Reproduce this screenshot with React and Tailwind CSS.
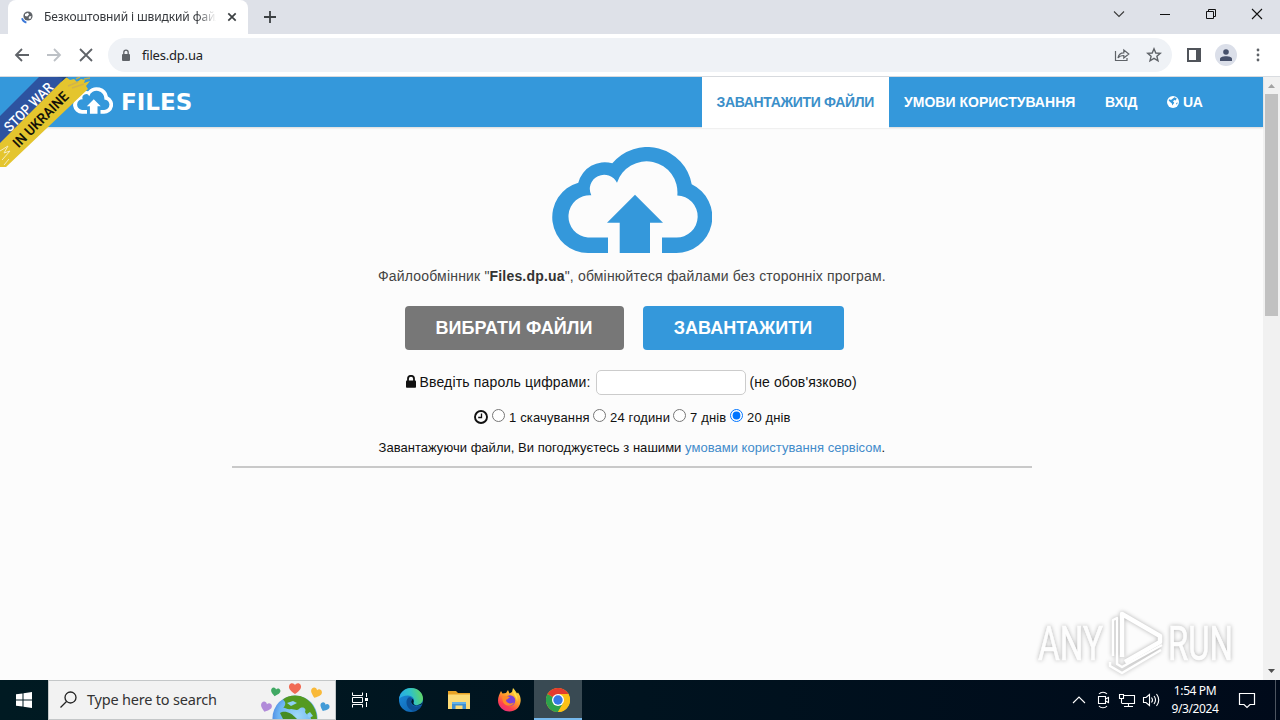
const navItems = [
  { title: "ЗАВАНТАЖИТИ ФАЙЛИ", box: "w-[187px] h-[51px] bg-white text-[#3b8fc9]", text: "w-[158px] tracking-[-0.34px]" },
  { title: "УМОВИ КОРИСТУВАННЯ", box: "w-[201px] h-[50px] text-white", text: "w-[171px] tracking-[0.02px]" },
  { title: "ВХІД", box: "w-[62px] h-[50px] text-white", text: "w-[32px] tracking-[-0.1px]" },
]

const lifetimes = [
  { label: "1 скачування", width: "w-[84px]" },
  { label: "24 години", width: "w-[63px]" },
  { label: "7 днів", width: "w-[40px]" },
  { label: "20 днів", width: "w-[42px]", checked: true },
]

function CloudLogo({ className, color }) {
  return (
    <svg viewBox="0 0 160 106" className={className} fill={color}>
      <path d="M56 106H36A35.83 35.83 0 0 1 26.3 35.7A27.3 27.3 0 0 1 60.3 16.3A45.3 45.3 0 0 1 139.7 37.3A36.1 36.1 0 0 1 124 106H110V90.5H124A20.5 20.5 0 0 0 125.3 48.5A31 31 0 0 0 65 35.7A14.3 14.3 0 0 0 39.3 48.3A21 21 0 0 0 36 90.5H56Z" />
      <path d="M83 47.7L111 75.7H98V106H67.7V75.7H55Z" />
    </svg>
  )
}

function StopWarRibbon() {
  return (
    <svg className="absolute left-0 top-0 h-[92px] w-[94px]" viewBox="0 0 94 92">
      <path d="M39 0H68L0 68V39Z" fill="#2d53a0" />
      <path d="M66 0L70 3L74 2L77 5L81 2L85 3L84 6L90 4L86 9L88 12L6 90H0V66Z" fill="#e4c52e" />
      <path d="M57 0H67L61 5L63 1Z" fill="#1f4688" />
      <path d="M76 2L80 0M84 2L90 1" stroke="#b9ab52" strokeWidth="1.6" />
      <path d="M0 74L8 69L4 76L10 74L2 83M4 88L9 82" stroke="#f6ecc0" strokeWidth="1" fill="none" />
      <path d="M68 9L78 5M72 11L84 7" stroke="#d3b34b" strokeWidth="1.4" />
      <g fontFamily="Roboto" fontSize="14" textAnchor="middle">
        <text transform="translate(32 33.500) rotate(-45)" fill="#fff" fontWeight="500" textLength="63" lengthAdjust="spacingAndGlyphs">STOP WAR</text>
        <text transform="translate(44 46) rotate(-45)" fill="#151208" fontWeight="600" textLength="72" lengthAdjust="spacingAndGlyphs">IN UKRAINE</text>
      </g>
    </svg>
  )
}

function TabStrip() {
  return (
    <div className="flex h-[34px] bg-[#dee1e8] pl-2">
      <div className="flex h-[34px] w-60 items-center rounded-t-lg bg-white pl-[13px]">
        <svg width="15" height="15" viewBox="0 0 15 15">
          <circle cx="7" cy="6" r="4.6" fill="#5f6368" />
          <path d="M4 4L7 2.8L8 4.5L6.2 6.5L4 6ZM8 6.4L10.4 6L9.4 9L7.6 8.6Z" fill="#fff" />
          <path d="M1 8.3A6 6 0 0 0 5.4 12.7" stroke="#3b78d8" strokeWidth="1.8" fill="none" />
        </svg>
        <div className="ml-2 w-[174px] overflow-hidden whitespace-nowrap text-[12px] leading-4 tracking-[-0.12px] text-[#35383c] [mask-image:linear-gradient(to_right,black_88%,transparent_99%)]">
          Безкоштовний і швидкий файл
        </div>
        <svg className="ml-[9px]" width="10" height="10" viewBox="0 0 10 10">
          <path d="M1.3 1.3L8.7 8.7M8.7 1.3L1.3 8.7" stroke="#3c4043" strokeWidth="1.7" />
        </svg>
      </div>
      <svg className="ml-4 mt-[11px]" width="12" height="12" viewBox="0 0 12 12">
        <path d="M6 0V12M0 6H12" stroke="#3c4043" strokeWidth="1.8" />
      </svg>
      <div className="mr-[17px] mt-[8px] ml-auto flex h-3 items-center gap-[34px]">
        <svg width="12" height="12" viewBox="0 0 12 12" fill="none" stroke="#3a3a3a" strokeWidth="1.1">
          <path d="M1 3.5L6 8.5L11 3.5" />
        </svg>
        <svg width="12" height="12" viewBox="0 0 12 12"><path d="M1 6.5H11" stroke="#111" /></svg>
        <svg width="12" height="12" viewBox="0 0 12 12" fill="none" stroke="#111">
          <path d="M1.5 3.5H8.5V10.5H1.5ZM3.5 3.5V1.5H10.5V8.5H8.5" />
        </svg>
        <svg width="12" height="12" viewBox="0 0 12 12" stroke="#111" strokeWidth="1.1">
          <path d="M1 1L11 11M11 1L1 11" />
        </svg>
      </div>
    </div>
  )
}

function Toolbar() {
  return (
    <div className="flex h-[43px] items-center border-b border-[#d9dce0] bg-white pl-[14px]">
      <svg width="80" height="16" viewBox="0 0 80 16" fill="none" strokeWidth="1.8">
        <path d="M15 8H2M8 2L2 8L8 14" stroke="#5f6368" />
        <path d="M33 8H46M40 2L46 8L40 14" stroke="#bdc1c6" />
        <path d="M66 2L78 14M78 2L66 14" stroke="#5f6368" />
      </svg>
      <div className="ml-[14px] flex h-[34px] w-[1064px] items-center rounded-full bg-[#eff2f6] pl-[13px]">
        <svg width="10" height="13" viewBox="0 0 10 13">
          <rect x="1" y="5" width="8" height="7" rx="1" fill="#5f6368" />
          <path d="M2.8 5V3.4A2.2 2.2 0 0 1 7.2 3.4V5" stroke="#5f6368" strokeWidth="1.3" fill="none" />
        </svg>
        <span className="ml-[11px] text-[13px] leading-5 tracking-[-0.2px] text-[#202124]">files.dp.ua</span>
        <svg className="ml-auto" width="16" height="16" viewBox="0 0 16 16" fill="none" stroke="#5f6368" strokeWidth="1.2">
          <path d="M1.5 4V13.5H13V11" />
          <path d="M4 11C4.5 7.5 7 5.8 9.8 5.8V3L14.8 7L9.8 11V8.5C7.4 8.5 5.5 9 4 11Z" />
        </svg>
        <svg className="ml-4 mr-[10px]" width="16" height="16" viewBox="0 0 16 16" fill="none" stroke="#5f6368" strokeWidth="1.4">
          <path d="M8 1.8L9.8 6L14.3 6.4L10.9 9.3L12 13.8L8 11.4L4 13.8L5.1 9.3L1.7 6.4L6.2 6Z" />
        </svg>
      </div>
      <svg className="ml-[15px]" width="14" height="14" viewBox="0 0 14 14">
        <path d="M0 0H14V14H0ZM2 2V12H9V2Z" fill="#50545a" fillRule="evenodd" />
      </svg>
      <div className="ml-[14px] flex h-[22px] w-[22px] items-center justify-center rounded-full bg-[#dbdfe9]">
        <svg width="12" height="12" viewBox="0 0 12 12" fill="#46506a">
          <circle cx="6" cy="3" r="2.8" />
          <path d="M0 12V9.8C0 6.4 12 6.4 12 9.8V12Z" />
        </svg>
      </div>
      <svg className="ml-[19px]" width="4" height="14" viewBox="0 0 4 14" fill="#5f6368">
        <circle cx="2" cy="2" r="1.4" />
        <circle cx="2" cy="7" r="1.4" />
        <circle cx="2" cy="12" r="1.4" />
      </svg>
    </div>
  )
}

function SiteHeader() {
  return (
    <header className="relative flex h-[50px] bg-[#3498db] pl-[73px] font-['Liberation_Sans',sans-serif] shadow-[0_1px_2px_rgba(0,0,0,0.15)]">
      <CloudLogo className="mt-[10px] h-[27px] w-10" color="#fff" />
      <span className="ml-[8px] mt-2.5 text-[23px] font-bold leading-[30px] text-white font-['DejaVu_Sans',sans-serif]">FILES</span>
      <nav className="absolute left-[702px] top-0 flex text-[14px] font-bold">
        {navItems.map((item) => (
          <div key={item.title} className={`flex items-center justify-center whitespace-nowrap ${item.box}`}>
            <span className={item.text}>{item.title}</span>
          </div>
        ))}
        <div className="flex h-[50px] items-center gap-1 pl-[15px] text-white">
          <svg width="12" height="12" viewBox="0 0 12 12">
            <circle cx="6" cy="6" r="6" fill="#fff" />
            <path d="M7.500 1.200L9.800 2.600L8.600 4.400L7.200 4L6 5.600L7.200 6.400L6.800 7.600L5.200 9.600L4.900 7.600L2.600 5.600L1.600 4.200L2.400 3.200L4 4Z" fill="#3498db" />
            <path d="M9 7L10.800 6.400L9.800 8.800Z" fill="#3498db" />
          </svg>
          <span className="tracking-[-0.3px]">UA</span>
        </div>
      </nav>
      <StopWarRibbon />
    </header>
  )
}

function UploadForm() {
  return (
    <main className="flex flex-col items-center font-['Liberation_Sans',sans-serif] text-[#111]">
      <CloudLogo className="mt-5 h-[106px] w-40" color="#3498db" />
      <p className="mt-[13px] h-5 w-[507px] whitespace-nowrap text-[14px] leading-5 tracking-[0.18px] text-[#444]">
        Файлообмінник "<b className="text-[#333]">Files.dp.ua</b>", обмінюйтеся файлами без сторонніх програм.
      </p>
      <div className="mt-5 mr-[15px] flex gap-[19px] text-[18px] font-bold text-white">
        <button className="h-11 w-[219px] rounded bg-[#777]">ВИБРАТИ ФАЙЛИ</button>
        <button className="h-11 w-[201px] rounded bg-[#3498db]">ЗАВАНТАЖИТИ</button>
      </div>
      <div className="mt-5 flex h-[25px] w-[452px] items-center whitespace-nowrap text-[14px]">
        <svg className="mb-[3px] shrink-0" width="10" height="13" viewBox="0 0 10 13">
          <rect y="5.5" width="10" height="7.3" rx=".8" fill="#111" />
          <path d="M2 6V3.8A3 3 0 0 1 8 3.8V6" stroke="#111" strokeWidth="1.8" fill="none" />
        </svg>
        <span className="ml-1 w-[176px] shrink-0 tracking-[0.17px]">Введіть пароль цифрами:</span>
        <input className="h-[25px] w-[150px] shrink-0 rounded-[5px] border border-[#ccc] bg-white" />
        <span className="ml-1 tracking-[0.1px]">(не обов'язково)</span>
      </div>
      <div className="mt-[12px] flex h-5 items-center whitespace-nowrap text-[13px]">
        <svg className="mr-1 mb-px" width="14" height="14" viewBox="0 0 14 14" fill="none" stroke="#111">
          <circle cx="7" cy="7" r="6" strokeWidth="1.9" />
          <path d="M7.5 3.5V7.5H4.2" strokeWidth="1.3" />
        </svg>
        {lifetimes.map((item) => (
          <label key={item.label} className="flex items-center">
            <input type="radio" name="lifetime" defaultChecked={item.checked} className="mb-[3px] mr-1 h-[13px] w-[13px]" />
            <span className={`pt-px leading-5 tracking-[0.15px] ${item.width}`}>{item.label}</span>
          </label>
        ))}
      </div>
      <p className="mt-[11px] h-5 w-[506px] whitespace-nowrap text-[13px] leading-5 tracking-[0.03px]">
        Завантажуючи файли, Ви погоджуєтесь з нашими <a className="text-[#428bca]">умовами користування сервісом</a>.
      </p>
      <hr className="mt-2 h-0.5 w-[800px] border-0 bg-[#c9c9c9]" />
    </main>
  )
}

function Watermark() {
  return (
    <svg className="absolute left-[1034px] top-[604px] [filter:drop-shadow(0_0_2px_rgba(0,0,0,0.3))]" width="216" height="76" viewBox="0 -4 216 76">
      <g fill="#fdfdfd" stroke="#fff" strokeWidth=".6" fontFamily="Roboto" fontSize="49" fontWeight="400">
        <text x="4" y="52" textLength="65" lengthAdjust="spacingAndGlyphs">ANY</text>
        <text x="134" y="52" textLength="65" lengthAdjust="spacingAndGlyphs">RUN</text>
      </g>
      <g fill="none" stroke="#fff" strokeLinejoin="round">
        <path d="M88 49V6L126 28V34L91 54" strokeWidth="4.500" />
        <path d="M79 48V12L83 10V56L88 59L128 37" strokeWidth="2.500" />
        <path d="M76 54V58L88 65L127 42" strokeWidth="2.500" />
      </g>
    </svg>
  )
}

function Scrollbar() {
  return (
    <div className="flex h-[603px] w-[17px] flex-col items-center bg-[#f1f1f1]">
      <svg width="17" height="17" viewBox="0 0 17 17"><path d="M5 11L8.5 7L12 11Z" fill="#a3a3a3" /></svg>
      <div className="h-[222px] w-[13px] bg-[#c1c1c1]" />
      <svg className="mt-auto" width="17" height="17" viewBox="0 0 17 17"><path d="M5 6L8.5 10L12 6Z" fill="#505050" /></svg>
    </div>
  )
}

function EarthHearts() {
  const heart = "M0 5C-5 1.500-6-.5-5.300-2.800C-4-5.500-1-5 0-3C1-5 4-5.500 5.300-2.800C6-.5 5 1.500 0 5Z"
  return (
    <svg className="ml-auto" width="80" height="38" viewBox="0 0 80 38">
      <defs>
        <radialGradient id="sea" cx=".55" cy=".45" r=".6">
          <stop offset="0" stopColor="#9fd8f8" />
          <stop offset=".7" stopColor="#6cb4f2" />
          <stop offset="1" stopColor="#4a85e0" />
        </radialGradient>
      </defs>
      <circle cx="40" cy="37" r="22.5" fill="url(#sea)" />
      <path d="M28 18.500C33 14 43 13 50 17C57 21 62 29 62 38H56C56 34 52 35 50 31C52 27 47 25 44 28C42 30 39 28 36 28C32 29 30 26 28 27C31 24 31 21 28 18.500Z" fill="#549a20" />
      <path d="M25 32C29 29 36 31 42 38H28Z" fill="#468c22" />
      <path d="M32 22L38 20L42 22L36 25ZM52 33L55 31L58 35L54 37Z" fill="#8ed0f5" />
      <path d={heart} fill="#f16a54" transform="translate(40 7.500) scale(1.1)" />
      <path d={heart} fill="#40a863" transform="translate(20.500 11) rotate(12) scale(.85)" />
      <path d={heart} fill="#f9b938" transform="translate(61 12) rotate(20)" />
      <path d={heart} fill="#b18bd9" transform="translate(11 26) rotate(18)" />
      <path d={heart} fill="#429bd7" transform="translate(69.500 26) rotate(24) scale(.85)" />
    </svg>
  )
}

function EdgeIcon() {
  return (
    <svg width="24" height="24" viewBox="0 0 24 24">
      <defs>
        <linearGradient id="edgeTop" x1="0" y1=".5" x2="1" y2=".3">
          <stop stopColor="#27a9e8" />
          <stop offset=".5" stopColor="#2fc2c8" />
          <stop offset="1" stopColor="#65d85c" />
        </linearGradient>
        <linearGradient id="edgeLow" x1="0" y1="0" x2="1" y2="1">
          <stop stopColor="#1c8fdf" />
          <stop offset="1" stopColor="#0c5aa6" />
        </linearGradient>
      </defs>
      <circle cx="12" cy="12" r="12" fill="url(#edgeLow)" />
      <path d="M.1 11C.8 4.700 5.700 0 12 0C19 0 24 5 24 10.500C24 15 20.500 17.200 17.300 17.200C14.500 17.200 13.600 16 14.600 14.600C16.400 11.500 13.500 7.500 9 7.500C5 7.500 1.500 9 .1 11Z" fill="url(#edgeTop)" />
      <path d="M9.500 9.500C6 12 7 20 13 22.500C18 23.500 21.500 20 22.500 17.500C17 20 11.500 18 12 13.500C12.200 12 13 11.500 13.500 11C12.500 9.500 11 9 9.500 9.500Z" fill="#0d4f96" />
      <path d="M12.300 13C11.700 16.500 15.500 19 22.500 16.600L23.500 14.500C20 18 14 18 14.500 14.500C15.100 13.300 14.500 11.500 13.500 10.800Z" fill="#00182a" />
    </svg>
  )
}

function FolderIcon() {
  return (
    <svg width="22" height="20" viewBox="0 0 22 20">
      <path d="M0 1H8L10 3H22V19H0Z" fill="#e8a325" />
      <path d="M0 4.500H22V19H0Z" fill="#fcdb76" />
      <path d="M4 19V12H18V19H14.500V15.500H7.500V19Z" fill="#3f8fd0" />
      <path d="M4 12H18V14H4Z" fill="#63b1e6" />
    </svg>
  )
}

function FirefoxIcon() {
  return (
    <svg width="23" height="24" viewBox="0 0 23 24">
      <defs>
        <linearGradient id="fox" x1=".8" y1="0" x2=".2" y2="1">
          <stop stopColor="#ffe84a" />
          <stop offset=".45" stopColor="#ff9a2a" />
          <stop offset=".75" stopColor="#ff4050" />
          <stop offset="1" stopColor="#e32c85" />
        </linearGradient>
      </defs>
      <path d="M3 3L4.500 5.500L8 5L10 2L11.500 5.500L14 4L15 0C17 2 18 4 19 5.500L20 4.500C22.500 8 23 11 22.500 14C21.500 20 17 23.500 11.500 23.500C5 23.500 0 18.500 0 12.500C0 9 1.500 6 3 3Z" fill="url(#fox)" />
      <circle cx="12" cy="12.500" r="5.300" fill="#7b42d8" />
      <path d="M4 9C7 7.500 10 8 12 9.500C10 10 10 11.500 8 11.800C8 15 12 16.500 16 14.500C15 18.500 7 19 5 14Z" fill="#ff8a26" />
      <path d="M15 2C18 6 20.500 9 19 14C19 9 15.500 8 15 2Z" fill="#ffe14a" />
    </svg>
  )
}

function ChromeIcon() {
  return (
    <svg width="24" height="24" viewBox="0 0 24 24">
      <circle cx="12" cy="12" r="12" fill="#fbc116" />
      <path d="M12 12L1.600 6A12 12 0 0 0 12 24L17.200 15Z" fill="#2da14c" />
      <path d="M12 12L1.600 6A12 12 0 0 1 22.400 6H12Z" fill="#e33b2e" />
      <path d="M12 6H22.400A12 12 0 0 1 12 24L17.200 15Z" fill="#fbc116" />
      <circle cx="12" cy="12" r="6" fill="#fff" />
      <circle cx="12" cy="12" r="4.700" fill="#3478e5" />
    </svg>
  )
}

function Taskbar() {
  return (
    <div className="flex h-10 bg-gradient-to-r from-[#001a22] via-[#00131f] to-[#000a1a] text-white">
      <div className="flex w-12 items-center justify-center">
        <svg width="16" height="16" viewBox="0 0 16 16" fill="#fff">
          <path d="M0 2.300L6.500 1.400V7.500H0ZM7.500 1.200L16 0V7.500H7.500ZM0 8.500H6.500V14.600L0 13.700ZM7.500 8.500H16V16L7.500 14.800Z" />
        </svg>
      </div>
      <div className="flex w-72 items-center border border-[#c4c7c8] bg-[#f2f2f2] text-[#333]">
        <svg className="ml-[11px]" width="17" height="18" viewBox="0 0 17 18" fill="none" stroke="#222" strokeWidth="1.3">
          <circle cx="10.500" cy="6.500" r="5.500" />
          <path d="M6.500 10.500L.5 16.500" />
        </svg>
        <span className="ml-[10px] whitespace-nowrap text-[14.5px] tracking-[-0.2px]">Type here to search</span>
        <EarthHearts />
      </div>
      <div className="flex w-12 items-center justify-center">
        <svg width="16" height="16" viewBox="0 0 16 16" fill="none" stroke="#fff">
          <path d="M.5 .5V3.500H10.500V.5M.5 15.500V12.500H10.500V15.500M.5 5.500H10.500V10.500H.5ZM14.500 1V5M14.500 10V15" />
          <path d="M13 6H16V9H13Z" fill="#fff" stroke="none" />
        </svg>
      </div>
      <div className="ml-[3px] flex w-12 items-center justify-center"><EdgeIcon /></div>
      <div className="flex w-12 items-center justify-center"><FolderIcon /></div>
      <div className="ml-0.5 flex w-12 items-center justify-center"><FirefoxIcon /></div>
      <div className="ml-px flex w-12 items-center justify-center border-b-2 border-[#76b9ed] bg-[#394a53] pt-0.5"><ChromeIcon /></div>
      <div className="ml-auto flex items-center">
        <svg width="92" height="20" viewBox="-1 0 92 20" fill="none" stroke="#fff" strokeWidth="1.1">
          <path d="M2 13L8 7L14 13" />
          <path d="M27.500 6.500H34.500V13.500H27.500ZM34.500 9L37.500 7.500V12.500L34.500 11M28 4C30 1.700 34 1.700 36 4M28 16C30 18.300 34 18.300 36 16" />
          <path d="M52.500 5.500H63.500V13.500H51M57.500 13.500V16.500M53 16.500H62M48.500 4.500H52.500V8.500H48.500ZM50.500 8.500V13.500" />
          <path d="M72.500 7.500H75L78.500 4.500V15.500L75 12.500H72.500ZM80.500 7.500Q82.500 10 80.500 12.500M83 6Q86 10 83 14M85.500 4Q90 10 85.500 16" />
        </svg>
        <div className="w-[66px] text-center text-[12px] leading-[18px] tracking-[-0.4px]">
          <div>1:54 PM</div>
          <div>9/3/2024</div>
        </div>
        <svg className="ml-[10px]" width="18" height="18" viewBox="0 0 18 18" fill="none" stroke="#fff" strokeWidth="1.2">
          <path d="M1.500 2.500H16.500V13.500H12L9 16.500L6 13.500H1.500Z" />
        </svg>
        <div className="ml-[19px] mr-1 h-10 w-px bg-[#4d5560]" />
      </div>
    </div>
  )
}

export default function App() {
  return (
    <div className="relative flex h-[720px] w-[1280px] flex-col overflow-hidden bg-white font-['Noto_Sans',sans-serif]">
      <TabStrip />
      <Toolbar />
      <div className="flex h-[603px]">
        <div className="w-[1263px] bg-[#fcfcfc]">
          <SiteHeader />
          <UploadForm />
        </div>
        <Scrollbar />
      </div>
      <Taskbar />
      <Watermark />
    </div>
  )
}
